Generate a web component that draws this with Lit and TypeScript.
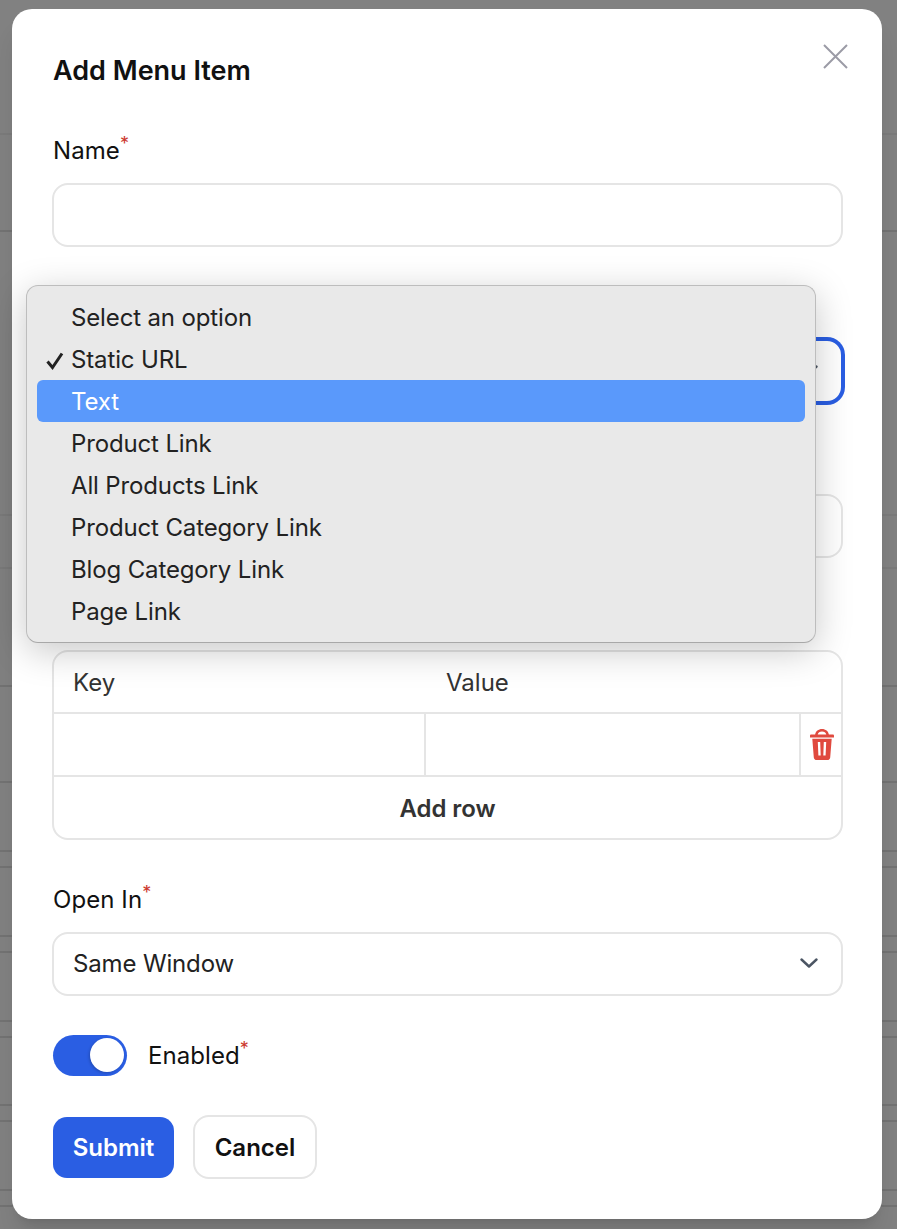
import { LitElement, html, css } from "lit";
import { customElement } from "lit/decorators.js";

const ROWS: [number, boolean][] = [
  [135, true], [97, false], [284, true], [53, true], [118, false], [96, false], [69, false], [16, false],
  [69, false], [16, false], [69, false], [16, false], [68, false], [16, false], [69, false], [16, false],
];
const OPTIONS = ["Select an option", "Static URL", "Text", "Product Link", "All Products Link", "Product Category Link", "Blog Category Link", "Page Link"];

const chevron = html`<svg class="chev" viewBox="0 0 18 10" fill="none" stroke="#4b5563" stroke-width="2.4" stroke-linecap="round" stroke-linejoin="round"><path d="M1.5 1.5 9 8.5 16.5 1.5"/></svg>`;

@customElement("app-root")
export class AppRoot extends LitElement {
  static styles = css`
    :host { display: block; position: relative; box-sizing: border-box; width: 897px; height: 1229px; padding: 9px 0 0 12px; overflow: hidden; background: #818181; font-family: Inter, "Liberation Sans", sans-serif; color: #111; }
    .backdrop { position: absolute; inset: 0; display: flex; flex-direction: column; }
    .backdrop div { flex: none; box-sizing: border-box; border-bottom: 2px solid #727272; }
    .backdrop div.faint { border-bottom-color: #7a7a7a; }
    .modal { position: relative; box-sizing: border-box; width: 870px; height: 1210px; background: #fff; border-radius: 20px; padding: 41px 39px 0 40px; box-shadow: 0 20px 25px -5px rgba(0,0,0,.1), 0 8px 10px -6px rgba(0,0,0,.1); }
    .title { font-size: 27px; font-weight: 600; line-height: 42px; height: 40px; margin: 0 0 44px 1px; }
    .close { position: absolute; left: 810px; top: 34px; width: 26px; height: 26px; }
    .label { height: 32px; margin: 0 0 17px 1px; font-size: 24px; line-height: 34px; font-weight: 400; letter-spacing: .08px; }
    sup { color: #cc382e; font-size: 18px; line-height: 0; font-weight: 400; vertical-align: 9px; }
    .control { box-sizing: border-box; border: 2px solid #e5e5e5; border-radius: 16px; height: 64px; background: #fff; display: flex; align-items: center; justify-content: space-between; padding: 0 23px 2px 19px; font-size: 24px; margin-bottom: 43px; letter-spacing: -.15px; color: #222; }
    .control.focus { border-color: #2a5ee3; box-shadow: 0 0 0 2px #2a5ee3; }
    .control.tight { margin-bottom: 42px; }
    .control.last { margin-bottom: 39px; }
    .chev { width: 18px; height: 10px; flex: none; }
    .table { box-sizing: border-box; border: 2px solid #e5e5e5; border-radius: 16px; height: 190px; margin-bottom: 43px; display: grid; grid-template-columns: 370px 375px 42px; grid-template-rows: 62px 63px 61px; font-size: 24px; color: #333; }
    .head { display: flex; align-items: center; padding-left: 19px; border-bottom: 2px solid #e5e5e5; }
    .head.value { padding-left: 22px; }
    .cell { border-bottom: 2px solid #e5e5e5; }
    .cell.next { border-left: 2px solid #e5e5e5; }
    .trash { display: flex; align-items: center; justify-content: center; }
    .trash svg { width: 24px; height: 31px; margin-left: 2px; }
    .add { grid-column: 1 / -1; display: flex; align-items: center; justify-content: center; padding-top: 2px; font-weight: 600; letter-spacing: -.05px; }
    .toggle-row { display: flex; align-items: center; gap: 21px; margin: 0 0 39px 1px; font-size: 24px; letter-spacing: .08px; }
    .toggle { box-sizing: border-box; width: 74px; height: 41px; border-radius: 21px; background: #2a5ee3; padding: 3px; display: flex; justify-content: flex-end; }
    .knob { width: 34px; height: 34px; border-radius: 50%; background: #fff; box-shadow: -1px 1px 3px rgba(0,0,0,.2); }
    .actions { display: flex; align-items: center; gap: 19px; margin-left: 1px; font-size: 24px; font-weight: 600; }
    .btn { box-sizing: border-box; display: flex; align-items: center; justify-content: center; }
    .submit { width: 121px; height: 61px; border-radius: 14px; background: #2a5ee3; color: #fff; }
    .cancel { width: 124px; height: 64px; border-radius: 16px; border: 2px solid #e5e5e5; color: #111; background: #fff; }
    .menu { position: absolute; left: 14px; top: 276px; width: 790px; height: 358px; box-sizing: border-box; background: #e9e9e9; border: 1px solid #bdbdbd; border-bottom-color: #a8a8a8; border-radius: 12px; padding: 10px; box-shadow: 0 8px 36px rgba(0,0,0,.22); }
    .opt { position: relative; box-sizing: border-box; height: 42px; line-height: 42px; padding: 1px 0 0 34px; border-radius: 6px; font-size: 24px; letter-spacing: -.14px; color: #222; }
    .opt.sel { background: #5a99fb; color: #fff; }
    .check { position: absolute; left: 9px; top: 14px; width: 18px; height: 18px; }
  `;

  render() {
    return html`
      <div class="backdrop">${ROWS.map(([h, faint]) => html`<div class=${faint ? "faint" : ""} style="height:${h}px"></div>`)}</div>
      <div class="modal">
        <h2 class="title">Add Menu Item</h2>
        <svg class="close" viewBox="0 0 26 26" fill="none" stroke="#9b9ba6" stroke-width="2"><path d="M2 2 25 25M25 2 2 25"/></svg>

        <div class="label">Name<sup>*</sup></div>
        <div class="control"></div>

        <div class="label"></div>
        <div class="control focus tight"><span></span>${chevron}</div>

        <div class="label"></div>
        <div class="control"></div>

        <div class="label"></div>
        <div class="table">
          <div class="head">Key</div>
          <div class="head value">Value</div>
          <div class="head"></div>
          <div class="cell"></div>
          <div class="cell next"></div>
          <div class="cell next trash">
            <svg viewBox="0 0 24 31"><path fill="#e04a3f" fill-rule="evenodd" d="M12 0c-3.6 0-6.4 2.2-6.9 5.6H1.2C.5 5.600 0 6.100 0 6.800v1.700h24V6.800c0-.7-.5-1.200-1.200-1.200h-3.900C18.400 2.200 15.600 0 12 0Zm0 2.500c2.200 0 3.900 1.200 4.300 3.100H7.700C8.100 3.700 9.800 2.500 12 2.500ZM2.300 9.800h19.400l-1.500 18.600c-.1 1.500-1.300 2.600-2.800 2.600H6.600c-1.500 0-2.700-1.100-2.800-2.600L2.300 9.800Zm5.500 3.200.6 13.600h2.300L10.200 13H7.800Zm6 0-.5 13.600h2.300l.6-13.600h-2.400Z"/></svg>
          </div>
          <div class="add">Add row</div>
        </div>

        <div class="label">Open In<sup>*</sup></div>
        <div class="control last"><span>Same Window</span>${chevron}</div>

        <div class="toggle-row">
          <div class="toggle"><div class="knob"></div></div>
          <span>Enabled<sup>*</sup></span>
        </div>

        <div class="actions">
          <div class="btn submit">Submit</div>
          <div class="btn cancel">Cancel</div>
        </div>

        <div class="menu">
          ${OPTIONS.map((o, i) => html`<div class="opt ${i === 2 ? "sel" : ""}">${i === 1 ? html`<svg class="check" viewBox="0 0 18 18" fill="none" stroke="#222" stroke-width="3"><path d="M1.500 9.500 6.500 15.500 16 1.500"/></svg>` : ""}${o}</div>`)}
        </div>
      </div>
    `;
  }
}
